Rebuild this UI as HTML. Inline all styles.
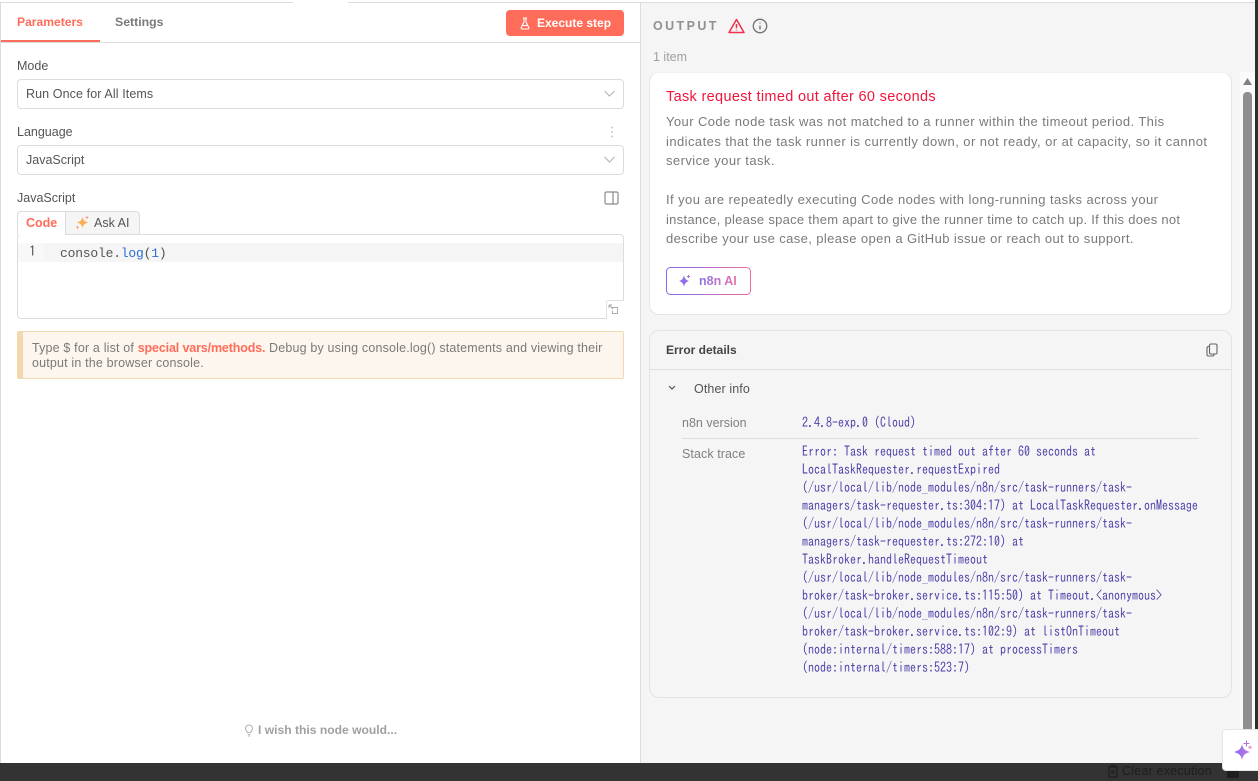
<!DOCTYPE html>
<html><head><meta charset="utf-8">
<style>
html,body{margin:0;padding:0;width:1258px;height:781px;overflow:hidden;background:#f5f5f5;font-family:"Liberation Sans",sans-serif;}
.a{position:absolute;white-space:nowrap;}
.box{position:absolute;box-sizing:border-box;}
.mono{font-family:"IPAGothic",monospace;font-size:14px;color:#4a3fa8;line-height:18px;transform:scaleX(.857);transform-origin:0 0;}
.p{font-size:13px;color:#7a7a7a;line-height:20px;letter-spacing:.43px;}
.sel{left:17px;width:607px;height:30px;border:1px solid #dcdcdc;border-radius:4px;background:#fff;}
.lab{font-size:12.5px;color:#555;left:17px;}
.grad{background:linear-gradient(90deg,#8a72ea,#e872a8);-webkit-background-clip:text;background-clip:text;color:transparent;}
</style></head><body>
<div class="box" style="left:0;top:0;width:1258px;height:3px;background:#fff;"></div>
<!-- left panel -->
<div class="box" style="left:0;top:2px;width:641px;height:761px;background:#fff;border:1px solid #dcdcdc;border-bottom:none;"></div>
<div class="box" style="left:293px;top:0;width:55px;height:4px;background:#fff;"></div>
<div class="box" style="left:1px;top:42px;width:639px;height:1px;background:#dcdcdc;"></div>
<div class="box" style="left:1px;top:40px;width:99px;height:2px;background:#ff6d5a;"></div>
<div class="a" style="left:17px;top:15px;font-size:12.1px;line-height:14px;font-weight:bold;color:#ff6d5a;">Parameters</div>
<div class="a" style="left:115px;top:15px;font-size:12.3px;line-height:14px;font-weight:bold;color:#7a7a7a;">Settings</div>
<div class="box" style="left:506px;top:10px;width:118px;height:26px;background:#ff6d5a;border-radius:4px;"></div>
<svg class="a" style="left:519px;top:17px" width="12" height="13" viewBox="0 0 12 13" fill="none" stroke="#fff" stroke-width="1.1"><path d="M4 1h4M5 1v4L2.200 10.500c-.3.700.1 1.500 1 1.500h5.600c.9 0 1.300-.8 1-1.500L7 5V1"/><path d="M3.500 8.500h5"/></svg>
<div class="a" style="left:537px;top:16px;font-size:12px;line-height:14px;font-weight:bold;color:#fff;">Execute step</div>

<div class="a lab" style="top:59px;">Mode</div>
<div class="box sel" style="top:79px;"></div>
<div class="a" style="left:26px;top:87px;font-size:12.500px;letter-spacing:.1px;color:#555;">Run Once for All Items</div>
<svg class="a" style="left:604px;top:90px" width="11" height="7" viewBox="0 0 11 7" fill="none" stroke="#b0b0b0" stroke-width="1"><path d="M.5 1l5 5 5-5"/></svg>

<div class="a lab" style="top:125px;">Language</div>
<svg class="a" style="left:610px;top:126px" width="4" height="12" viewBox="0 0 4 12" fill="#c8c8c8"><circle cx="2" cy="1.500" r="1"/><circle cx="2" cy="6" r="1"/><circle cx="2" cy="10.500" r="1"/></svg>
<div class="box sel" style="top:145px;"></div>
<div class="a" style="left:26px;top:153px;font-size:12.500px;color:#555;">JavaScript</div>
<svg class="a" style="left:604px;top:156px" width="11" height="7" viewBox="0 0 11 7" fill="none" stroke="#b0b0b0" stroke-width="1"><path d="M.5 1l5 5 5-5"/></svg>

<div class="a lab" style="top:191px;">JavaScript</div>
<svg class="a" style="left:604px;top:191px" width="15" height="14" viewBox="0 0 15 14" fill="none" stroke="#8a8a8a" stroke-width="1.200"><rect x="1" y="1" width="13" height="12" rx="1.500"/><path d="M9 1v12"/></svg>

<div class="box" style="left:17px;top:234px;width:607px;height:85px;border:1px solid #dcdcdc;border-radius:4px;background:#fff;"></div>
<div class="box" style="left:17px;top:211px;width:49px;height:24px;background:#fff;border:1px solid #dcdcdc;border-bottom:none;border-radius:4px 0 0 0;"></div>
<div class="box" style="left:65px;top:211px;width:75px;height:24px;background:#f5f5f5;border:1px solid #dcdcdc;border-radius:0 4px 0 0;"></div>
<div class="a" style="left:26px;top:216px;font-size:12.500px;font-weight:bold;color:#ff6d5a;">Code</div>
<svg class="a" style="left:75px;top:215px" width="15" height="15" viewBox="0 0 15 15"><path d="M7.500 1.500c.7 3.800 2.200 5.300 6 6-3.800.7-5.300 2.200-6 6-.7-3.800-2.200-5.300-6-6 3.800-.7 5.300-2.200 6-6z" fill="#fbae55"/><path d="M12 .5l.5 1.500 1.500.5-1.500.5-.5 1.500-.5-1.500L10 2.500l1.500-.5z" fill="#ff8a70"/><path d="M2.500 10.500l.5 1.300 1.300.5-1.300.5-.5 1.300-.5-1.300-1.300-.5 1.300-.5z" fill="#ff8a70"/></svg>
<div class="a" style="left:94px;top:216px;font-size:12.500px;color:#555;">Ask AI</div>

<div class="box" style="left:44px;top:243px;width:579px;height:19px;background:#f5f5f5;"></div>
<div class="box" style="left:18px;top:243px;width:26px;height:19px;background:#f8f8f8;"></div>
<div class="a" style="left:29px;top:242px;font-family:'IPAGothic',monospace;font-size:14px;line-height:18px;color:#555;">1</div>
<div class="a" style="left:60px;top:245px;font-family:'Liberation Mono',monospace;font-size:13px;letter-spacing:-.2px;line-height:18px;color:#555;">console.<span style="color:#2f6fd0;">log</span>(<span style="color:#2f6fd0;">1</span>)</div>
<div class="box" style="left:606px;top:300px;width:18px;height:19px;background:#fff;border:1px solid #e0e0e0;border-right:none;border-bottom:none;border-radius:3px 0 0 0;"></div>
<svg class="a" style="left:608px;top:304px" width="11" height="11" viewBox="0 0 11 11" fill="none" stroke="#aaa" stroke-width=".9"><path d="M4 3.500h5.500v6H4.500V6.500"/><path d="M1 1l4 4M1 1v3M1 1h3"/></svg>

<div class="box" style="left:17px;top:331px;width:607px;height:48px;background:#fdf6ee;border:1px solid #f2d8ae;border-left:6px solid #f2d8ae;border-radius:2px;"></div>
<div class="a" style="left:32px;top:341px;font-size:12.500px;line-height:15px;letter-spacing:.17px;color:#7a7a7a;">Type $ for a list of <b style="color:#ff6d5a;letter-spacing:-.14px;">special vars/methods.</b> Debug by using console.log() statements and viewing their<br>output in the browser console.</div>

<svg class="a" style="left:244px;top:724px" width="10" height="13" viewBox="0 0 10 13" fill="none" stroke="#b5b5b5" stroke-width="1.100"><path d="M3.500 8.500C2.800 7 1.500 6.500 1.500 4.500a3.500 3.500 0 0 1 7 0c0 2-1.300 2.500-2 4z"/><path d="M3.500 10.500h3M4 12h2"/></svg>
<div class="a" style="left:258px;top:723px;font-size:12.100px;line-height:14px;font-weight:bold;color:#a0a0a0;">I wish this node would...</div>

<!-- right panel -->
<div class="box" style="left:641px;top:2px;width:614px;height:761px;background:#f5f5f5;border-top:1px solid #dcdcdc;"></div>
<div class="a" style="left:653px;top:19px;font-size:12.500px;font-weight:bold;letter-spacing:2.400px;color:#909090;">OUTPUT</div>
<svg class="a" style="left:728px;top:18px" width="17" height="16" viewBox="0 0 17 16" fill="none" stroke="#f0304e" stroke-width="1.500" stroke-linejoin="round"><path d="M8.500 1.500L16 14.500H1z"/><path d="M8.500 6v4.200M8.500 11.700v.8"/></svg>
<svg class="a" style="left:752px;top:18px" width="16" height="16" viewBox="0 0 16 16" fill="none" stroke="#707070" stroke-width="1.300"><circle cx="8" cy="8" r="6.700"/><path d="M8 7.500v4M8 4.500v1"/></svg>
<div class="a" style="left:653px;top:50px;font-size:12.500px;color:#a0a0a0;">1 item</div>

<div class="box" style="left:649px;top:72px;width:583px;height:243px;background:#fff;border:1px solid #e5e5e5;border-top-color:#f0f0f0;border-radius:10px;"></div>
<div class="a" style="left:666px;top:89px;font-size:14.500px;letter-spacing:.33px;color:#f0143c;">Task request timed out after 60 seconds</div>
<div class="a p" style="left:666px;top:112px;letter-spacing:.42px;">Your Code node task was not matched to a runner within the timeout period. This</div>
<div class="a p" style="left:666px;top:132px;letter-spacing:.44px;">indicates that the task runner is currently down, or not ready, or at capacity, so it cannot</div>
<div class="a p" style="left:666px;top:151px;">service your task.</div>
<div class="a p" style="left:666px;top:190px;">If you are repeatedly executing Code nodes with long-running tasks across your</div>
<div class="a p" style="left:666px;top:210px;letter-spacing:.28px;">instance, please space them apart to give the runner time to catch up. If this does not</div>
<div class="a p" style="left:666px;top:229px;letter-spacing:.39px;">describe your use case, please open a GitHub issue or reach out to support.</div>

<svg class="a" style="left:666px;top:267px" width="85" height="28" viewBox="0 0 85 28" fill="none"><defs><linearGradient id="g" x1="0" x2="1" y1="0" y2="0"><stop offset="0" stop-color="#7b6cf0"/><stop offset="1" stop-color="#ee6d9a"/></linearGradient></defs><rect x=".5" y=".5" width="84" height="27" rx="4" stroke="url(#g)"/><path d="M18 8c.6 3.500 1.800 5 5 6-3.200 1-4.400 2.500-5 6-.6-3.500-1.800-5-5-6 3.200-1 4.400-2.500 5-6z" fill="#8f6fe6"/><path d="M22.500 8v3M21 9.500h3" stroke="#a070e0"/></svg>
<div class="a grad" style="left:699px;top:274px;font-size:12.500px;font-weight:bold;">n8n AI</div>

<div class="box" style="left:649px;top:330px;width:583px;height:368px;border:1px solid #e3e3e3;border-radius:10px;"></div>
<div class="box" style="left:650px;top:369px;width:581px;height:1px;background:#e0e0e0;"></div>
<div class="a" style="left:666px;top:343px;font-size:12px;line-height:14px;font-weight:bold;color:#444;">Error details</div>
<svg class="a" style="left:1206px;top:343px" width="12" height="14" viewBox="0 0 12 14" fill="none" stroke="#666" stroke-width="1.100"><rect x="3.500" y="1" width="7.500" height="10" rx="1.500"/><path d="M3.500 3.500H2.500A1.500 1.500 0 0 0 1 5v6.500A1.500 1.500 0 0 0 2.500 13h4A1.500 1.500 0 0 0 8 11.500"/></svg>
<svg class="a" style="left:668px;top:385px" width="8" height="6" viewBox="0 0 8 6" fill="none" stroke="#555" stroke-width="1.200"><path d="M1 1l3 3 3-3"/></svg>
<div class="a" style="left:694px;top:382px;font-size:12.500px;letter-spacing:.1px;color:#555;">Other info</div>
<div class="a" style="left:682px;top:416px;font-size:12.500px;color:#808080;">n8n version</div>
<div class="a mono" style="left:802px;top:413px;">2.4.8-exp.0 (Cloud)</div>
<div class="box" style="left:682px;top:438px;width:517px;height:1px;background:#dedede;"></div>
<div class="a" style="left:682px;top:447px;font-size:12.500px;letter-spacing:.08px;color:#808080;">Stack trace</div>
<div class="a mono" style="left:802px;top:442px;">Error: Task request timed out after 60 seconds at<br>LocalTaskRequester.requestExpired<br>(/usr/local/lib/node_modules/n8n/src/task-runners/task-<br>managers/task-requester.ts:304:17) at LocalTaskRequester.onMessage<br>(/usr/local/lib/node_modules/n8n/src/task-runners/task-<br>managers/task-requester.ts:272:10) at<br>TaskBroker.handleRequestTimeout<br>(/usr/local/lib/node_modules/n8n/src/task-runners/task-<br>broker/task-broker.service.ts:115:50) at Timeout.&lt;anonymous&gt;<br>(/usr/local/lib/node_modules/n8n/src/task-runners/task-<br>broker/task-broker.service.ts:102:9) at listOnTimeout<br>(node:internal/timers:588:17) at processTimers<br>(node:internal/timers:523:7)</div>

<!-- scrollbar -->
<div class="box" style="left:1240px;top:72px;width:15px;height:691px;background:#fafafa;"></div>
<div class="box" style="left:1243px;top:92px;width:9px;height:671px;background:#8f8f8f;border-radius:4px 4px 0 0;"></div>
<svg class="a" style="left:1243px;top:78px" width="9" height="7" viewBox="0 0 9 7" fill="#808080"><path d="M4.500 0L9 7H0z"/></svg>
<div class="box" style="left:1255px;top:0;width:3px;height:781px;background:#2e2e2e;"></div>

<!-- bottom bar -->
<div class="box" style="left:0;top:763px;width:1258px;height:18px;background:#333;"></div>
<svg class="a" style="left:1107px;top:764px" width="12" height="14" viewBox="0 0 12 14" fill="none" stroke="#1e1e1e" stroke-width="1.200"><path d="M1 3h10M4 3V1.500h4V3M2 3v10h8V3M5 6v4M7 6v4"/></svg>
<div class="a" style="left:1122px;top:764px;font-size:12.500px;letter-spacing:.2px;color:#1e1e1e;">Clear execution</div>
<div class="box" style="left:1227px;top:770px;width:12px;height:8px;background:#1e1e1e;border-radius:0 0 2px 2px;"></div>

<!-- assistant button -->
<div class="box" style="left:1222px;top:729px;width:36px;height:42px;background:#fff;border:1px solid #e5e5e5;border-right:none;border-radius:4px 0 0 4px;"></div>
<svg class="a" style="left:1233px;top:740px" width="20" height="20" viewBox="0 0 20 20"><defs><linearGradient id="h" x1="0" x2="1" y1="0" y2="0"><stop offset="0" stop-color="#7f6cf2"/><stop offset="1" stop-color="#c878e0"/></linearGradient></defs><path d="M9 4c.8 4.500 2.500 6.500 8 8-5.500 1.500-7.200 3.500-8 8-.8-4.500-2.500-6.500-8-8 5.500-1.500 7.200-3.500 8-8z" fill="url(#h)"/><path d="M13.500 .5v6M10.500 3.500h6" stroke="#b070e0" fill="none"/><path d="M17 5.500v3.500M15.300 7.200h3.500" stroke="#e080c8" fill="none"/></svg>
</body></html>
